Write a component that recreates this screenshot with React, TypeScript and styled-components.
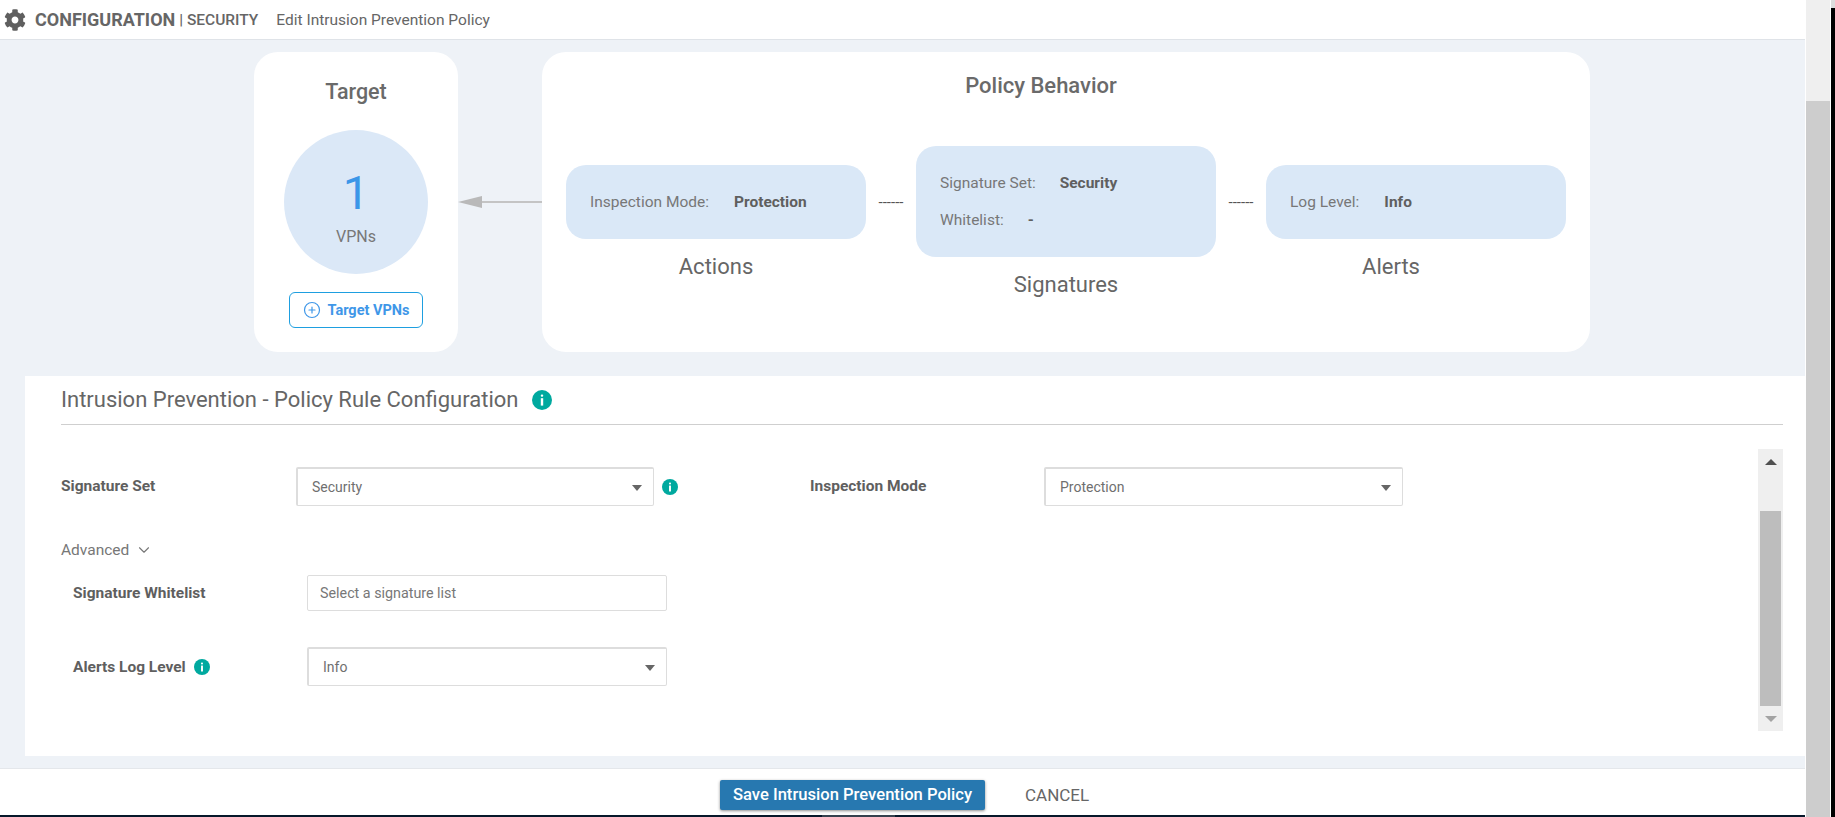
import React from 'react'
import styled, {createGlobalStyle} from 'styled-components'
import {FaCog} from 'react-icons/fa'
import {ChevronDown, CirclePlus} from 'lucide-react'

const GlobalStyle = createGlobalStyle`
  html, body {
    margin: 0;
    padding: 0;
    background: #ffffff;
    overflow: hidden;
  }

  * {
    box-sizing: border-box;
  }

  body {
    font-family: Roboto, "Liberation Sans", sans-serif;
    color: #666666;
  }
`

const Page = styled.div`
  display: flex;
  width: 1835px;
  height: 817px;
  overflow: hidden;
`

const Main = styled.div`
  display: flex;
  flex-direction: column;
  width: 1805px;
  height: 817px;
  background: #eef2f7;
`

const PageScrollbar = styled.div`
  width: 24px;
  margin-left: 1px;
  padding-top: 101px;
  background: #efefef;
`

const PageScrollThumb = styled.div`
  height: 716px;
  background: #cdcdcd;
`

const WindowEdge = styled.div`
  width: 4px;
  margin-left: 1px;
  border-top: 8px solid #dddddd;
  background: #000000;
`

const Header = styled.header`
  display: flex;
  align-items: center;
  height: 40px;
  padding-left: 4px;
  background: #ffffff;
  border-bottom: 1px solid #dfe3e8;
  color: #666666;
`

const GearIcon = styled(FaCog)`
  width: 22px;
  height: 22px;
  margin-right: 9px;
  color: #5f5f5f;
`

const Section = styled.span`
  font-size: 18px;
  font-weight: 700;
`

const SubSection = styled.span`
  margin-left: 4px;
  font-size: 15.5px;
  font-weight: 500;
`

const PageTitle = styled.span`
  margin-left: 18px;
  font-size: 15.5px;
`

const Overview = styled.section`
  display: flex;
  height: 336px;
  padding: 12px 0 24px 254px;
`

const TargetCard = styled.div`
  display: flex;
  flex-direction: column;
  align-items: center;
  width: 204px;
  height: 300px;
  padding-top: 25px;
  background: #ffffff;
  border-radius: 24px;
`

const CardTitle = styled.h2`
  margin: 0;
  font-size: 21.5px;
  font-weight: 500;
  line-height: 30px;
  color: #6a6a6a;
  text-align: center;
`

const PolicyTitle = styled(CardTitle)`
  padding-right: 50px;
  font-size: 22px;
`

const VpnCircle = styled.div`
  display: flex;
  flex-direction: column;
  align-items: center;
  width: 144px;
  height: 144px;
  margin-top: 23px;
  padding-top: 35px;
  background: #dbe8f7;
  border-radius: 50%;
`

const VpnCount = styled.div`
  font-size: 47px;
  line-height: 56px;
  color: #3b96e8;
`

const VpnLabel = styled.div`
  margin-top: 6px;
  font-size: 16px;
  line-height: 20px;
  color: #777777;
`

const TargetButton = styled.button`
  display: flex;
  align-items: center;
  justify-content: center;
  gap: 7px;
  width: 134px;
  height: 36px;
  margin-top: 18px;
  padding: 0;
  font-family: inherit;
  font-size: 14.5px;
  font-weight: 700;
  color: #3f97e8;
  background: #ffffff;
  border: 1px solid #1e9fe0;
  border-radius: 6px;
`

const ArrowLink = styled.svg`
  align-self: center;
  flex: none;
  display: block;
  width: 84px;
  height: 14px;
`

const PolicyCard = styled.div`
  width: 1048px;
  height: 300px;
  padding: 19px 24px 0;
  background: #ffffff;
  border-radius: 24px;
`

const StageRow = styled.div`
  display: flex;
  align-items: flex-start;
  margin-top: 45px;
`

const Stage = styled.div<{$inset?: boolean}>`
  display: flex;
  flex-direction: column;
  flex: none;
  width: 300px;
  padding-top: ${p => (p.$inset ? '19px' : '0')};
`

const StageBox = styled.div`
  display: flex;
  flex-direction: column;
  justify-content: center;
  gap: 19px;
  padding: 28px 24px;
  background: #dae8f7;
  border-radius: 20px;
`

const StageLine = styled.div`
  display: flex;
  align-items: center;
  height: 18px;
  font-size: 15.5px;
  color: #777777;
`

const StageValue = styled.b<{$gap: number}>`
  margin-left: ${p => p.$gap}px;
  font-weight: 700;
  color: #5f5f5f;
`

const StageCaption = styled.div<{$shift?: number}>`
  margin-top: 14px;
  padding-right: ${p => p.$shift ?? 0}px;
  font-size: 22px;
  line-height: 28px;
  color: #666666;
  text-align: center;
`

const Connector = styled.div`
  display: flex;
  flex: none;
  align-items: center;
  justify-content: center;
  width: 50px;
  height: 111px;
  font-size: 15px;
  color: #555555;
`

const RulePanel = styled.section`
  height: 380px;
  margin-left: 25px;
  padding: 9px 22px 0 36px;
  background: #ffffff;
`

const PanelHeading = styled.div`
  display: flex;
  align-items: center;
  gap: 14px;
  height: 40px;
  padding: 2px 0 12px;
  border-bottom: 1px solid #cfcfcf;
`

const PanelTitle = styled.h3`
  margin: 0;
  font-size: 22px;
  font-weight: 400;
  line-height: 26px;
  color: #666666;
`

const PanelBody = styled.div`
  display: flex;
  justify-content: space-between;
  margin-top: 24px;
`

const Form = styled.div`
  padding-top: 18px;
`

const FieldRow = styled.div`
  display: flex;
`

const FieldGroup = styled.div<{$width: number}>`
  display: flex;
  align-items: center;
  width: ${p => p.$width}px;
`

const FieldLabel = styled.label<{$width: number}>`
  display: flex;
  align-items: center;
  gap: 8px;
  width: ${p => p.$width}px;
  margin-top: -2px;
  font-size: 15.5px;
  font-weight: 700;
  color: #5f5f5f;
`

const SelectBox = styled.div<{$width: number}>`
  position: relative;
  display: flex;
  align-items: center;
  width: ${p => p.$width}px;
  height: 39px;
  padding-left: 14px;
  font-size: 14px;
  color: #6f6f6f;
  background: #ffffff;
  border: 1px solid #dddddd;
  border-top-width: 2px;
  border-left-width: 2px;
  border-radius: 2px;
`

const SelectCaret = styled.span`
  position: absolute;
  right: 11px;
  top: 16px;
  width: 0;
  height: 0;
  border-left: 5px solid transparent;
  border-right: 5px solid transparent;
  border-top: 6px solid #666666;
`

const InfoGap = styled.span`
  width: 8px;
`

const TextBox = styled.div`
  display: flex;
  align-items: center;
  width: 360px;
  height: 36px;
  padding-left: 12px;
  font-size: 14.3px;
  color: #777777;
  border: 1px solid #dddddd;
  border-radius: 2px;
`

const AdvancedToggle = styled.div`
  display: flex;
  align-items: center;
  gap: 6px;
  height: 20px;
  margin-top: 34px;
  font-size: 15.5px;
  color: #777777;
`

const AdvancedFields = styled.div`
  display: flex;
  flex-direction: column;
  gap: 36px;
  margin-top: 15px;
  padding-left: 12px;

  ${FieldLabel} {
    margin-top: 0;
  }
`

const InnerScrollbar = styled.div`
  display: flex;
  flex-direction: column;
  align-items: center;
  width: 25px;
  height: 282px;
  background: #efefef;
`

const ScrollUp = styled.div`
  display: flex;
  justify-content: center;
  flex: 1;
  width: 100%;
  padding-top: 10px;
`

const ScrollDown = styled.div`
  display: flex;
  align-items: center;
  justify-content: center;
  flex: none;
  width: 100%;
  height: 25px;
`

const ScrollArrow = styled.span<{$down?: boolean}>`
  width: 0;
  height: 0;
  border-left: 6px solid transparent;
  border-right: 6px solid transparent;
  ${p => (p.$down
    ? 'border-top: 6px solid #a3a3a3;'
    : 'border-bottom: 6px solid #505050;')}
`

const InnerThumb = styled.div`
  flex: none;
  width: 21px;
  height: 195px;
  background: #bdbdbd;
`

const Footer = styled.footer`
  display: flex;
  align-items: center;
  gap: 40px;
  height: 47px;
  margin-top: 12px;
  padding: 5px 0 0 720px;
  background: #ffffff;
  border-top: 1px solid #e4e7eb;
`

const SaveButton = styled.button`
  width: 265px;
  height: 30px;
  padding: 0;
  font-family: inherit;
  font-size: 16.6px;
  font-weight: 500;
  color: #ffffff;
  background: #2778b0;
  border: none;
  border-radius: 2px;
  box-shadow: 0 1px 3px rgba(0, 0, 0, 0.45);
`

const CancelButton = styled.button`
  padding: 0;
  font-family: inherit;
  font-size: 17px;
  color: #666666;
  background: none;
  border: none;
`

const Taskbar = styled.div`
  flex: none;
  height: 2px;
  padding-left: 822px;
  background: #07182a;
`

const TaskbarItem = styled.div`
  width: 73px;
  height: 2px;
  background: #36414e;
`

const InfoSvg = styled.svg`
  flex: none;
`

const InfoDot: React.FC<{size: number}> = ({size}) => (
  <InfoSvg width={size} height={size} viewBox="0 0 20 20">
    <circle cx="10" cy="10" r="10" fill="#00a99f"/>
    <rect x="8.8" y="4.4" width="2.4" height="2.4" rx="1" fill="#ffffff"/>
    <rect x="8.8" y="8.2" width="2.4" height="7.4" fill="#ffffff"/>
  </InfoSvg>
)

const App: React.FC = () => {
  return (
    <Page>
      <GlobalStyle/>
      <Main>
        <Header>
          <GearIcon/>
          <Section>CONFIGURATION</Section>
          <SubSection>| SECURITY</SubSection>
          <PageTitle>Edit Intrusion Prevention Policy</PageTitle>
        </Header>

        <Overview>
          <TargetCard>
            <CardTitle>Target</CardTitle>
            <VpnCircle>
              <VpnCount>1</VpnCount>
              <VpnLabel>VPNs</VpnLabel>
            </VpnCircle>
            <TargetButton>
              <CirclePlus size={18} strokeWidth={1.6}/>
              Target VPNs
            </TargetButton>
          </TargetCard>

          <ArrowLink viewBox="0 0 84 14">
            <polygon points="0,7 24,1 24,13" fill="#b9b9b9"/>
            <rect x="24" y="6" width="60" height="2" fill="#c4c4c4"/>
          </ArrowLink>

          <PolicyCard>
            <PolicyTitle>Policy Behavior</PolicyTitle>
            <StageRow>
              <Stage $inset>
                <StageBox>
                  <StageLine>
                    Inspection Mode:
                    <StageValue $gap={25}>Protection</StageValue>
                  </StageLine>
                </StageBox>
                <StageCaption>Actions</StageCaption>
              </Stage>
              <Connector>------</Connector>
              <Stage>
                <StageBox>
                  <StageLine>
                    Signature Set:
                    <StageValue $gap={24}>Security</StageValue>
                  </StageLine>
                  <StageLine>
                    Whitelist:
                    <StageValue $gap={24}>-</StageValue>
                  </StageLine>
                </StageBox>
                <StageCaption>Signatures</StageCaption>
              </Stage>
              <Connector>------</Connector>
              <Stage $inset>
                <StageBox>
                  <StageLine>
                    Log Level:
                    <StageValue $gap={25}>Info</StageValue>
                  </StageLine>
                </StageBox>
                <StageCaption $shift={50}>Alerts</StageCaption>
              </Stage>
            </StageRow>
          </PolicyCard>
        </Overview>

        <RulePanel>
          <PanelHeading>
            <PanelTitle>Intrusion Prevention - Policy Rule Configuration</PanelTitle>
            <InfoDot size={20}/>
          </PanelHeading>
          <PanelBody>
            <Form>
              <FieldRow>
                <FieldGroup $width={749}>
                  <FieldLabel $width={235}>Signature Set</FieldLabel>
                  <SelectBox $width={358}>
                    Security
                    <SelectCaret/>
                  </SelectBox>
                  <InfoGap/>
                  <InfoDot size={16}/>
                </FieldGroup>
                <FieldGroup $width={593}>
                  <FieldLabel $width={234}>Inspection Mode</FieldLabel>
                  <SelectBox $width={359}>
                    Protection
                    <SelectCaret/>
                  </SelectBox>
                </FieldGroup>
              </FieldRow>

              <AdvancedToggle>
                Advanced
                <ChevronDown size={18} strokeWidth={1.5}/>
              </AdvancedToggle>

              <AdvancedFields>
                <FieldGroup $width={594}>
                  <FieldLabel $width={234}>Signature Whitelist</FieldLabel>
                  <TextBox>Select a signature list</TextBox>
                </FieldGroup>
                <FieldGroup $width={594}>
                  <FieldLabel $width={234}>
                    Alerts Log Level
                    <InfoDot size={16}/>
                  </FieldLabel>
                  <SelectBox $width={360}>
                    Info
                    <SelectCaret/>
                  </SelectBox>
                </FieldGroup>
              </AdvancedFields>
            </Form>

            <InnerScrollbar>
              <ScrollUp><ScrollArrow/></ScrollUp>
              <InnerThumb/>
              <ScrollDown><ScrollArrow $down/></ScrollDown>
            </InnerScrollbar>
          </PanelBody>
        </RulePanel>

        <Footer>
          <SaveButton>Save Intrusion Prevention Policy</SaveButton>
          <CancelButton>CANCEL</CancelButton>
        </Footer>
        <Taskbar><TaskbarItem/></Taskbar>
      </Main>
      <PageScrollbar><PageScrollThumb/></PageScrollbar>
      <WindowEdge/>
    </Page>
  )
}

export default App
